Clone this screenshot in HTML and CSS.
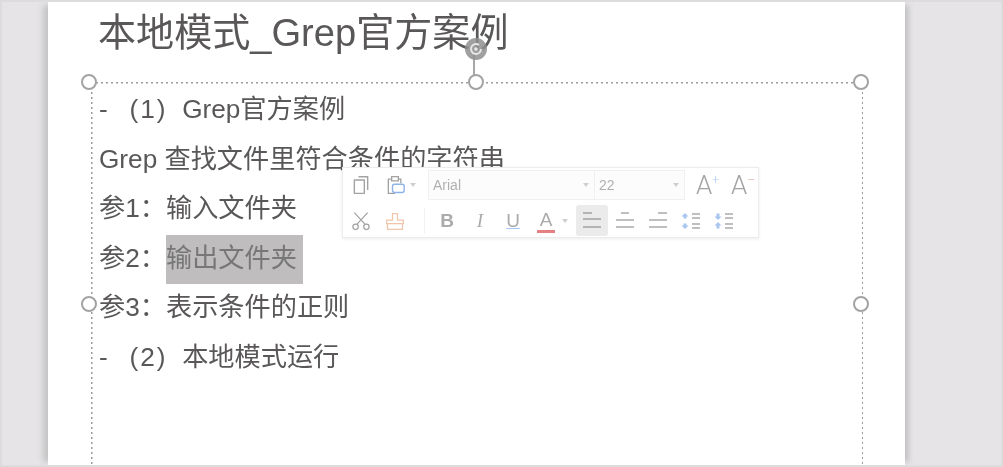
FILE: index.html
```html
<!DOCTYPE html>
<html lang="zh">
<head>
<meta charset="utf-8">
<title>本地模式_Grep官方案例</title>
<link rel="stylesheet" href="styles.css">
</head>
<body>
<div class="screen">
  <div class="slide">
    <h1 class="title">本地模式_Grep官方案例</h1>
    <div class="body">
      <p>-&nbsp;&nbsp;&nbsp;<span class="num">(1)</span>&nbsp;&nbsp;Grep官方案例</p>
      <p>Grep 查找文件里符合条件的字符串</p>
      <p>参1：输入文件夹</p>
      <p>参2：<span class="sel">输出文件夹</span></p>
      <p>参3：表示条件的正则</p>
      <p>-&nbsp;&nbsp;&nbsp;<span class="num">(2)</span>&nbsp;&nbsp;本地模式运行</p>
    </div>

    <div class="frame"></div>
    <div class="stem"></div>
    <svg class="rotate" viewBox="0 0 24 24" width="24" height="24">
      <circle cx="12" cy="12" r="11" fill="#8f8f8f" fill-opacity=".85"/>
      <path d="M17 12a5 5 0 1 1-2-4" fill="none" stroke="#e8e8e8" stroke-width="1.8"/>
      <circle cx="12" cy="12" r="1.8" fill="#e8e8e8"/>
    </svg>
    <span class="handle h-tl"></span>
    <span class="handle h-tc"></span>
    <span class="handle h-tr"></span>
    <span class="handle h-ml"></span>
    <span class="handle h-mr"></span>

    <div class="toolbar">
      <div class="row">
        <svg class="ico" viewBox="0 0 24 24"><path d="M9 2h11v16M4 6h12v16H4z" fill="none" stroke="#a3a3a3" stroke-width="1.7" stroke-linejoin="round"/></svg>
        <svg class="ico ico-wide" viewBox="0 0 24 24"><path d="M8 5H4v17h8M16 5h3v5M8 2h8v5H8z" fill="none" stroke="#a3a3a3" stroke-width="1.6"/><rect x="9" y="11" width="14" height="10" rx="2.5" fill="#fff" stroke="#8fb2e8" stroke-width="1.7"/></svg>
        <span class="caret"></span>
        <div class="field field-font"><span>Arial</span><span class="caret"></span></div>
        <div class="field field-size"><span>22</span><span class="caret"></span></div>
        <span class="grow">A<sup>+</sup></span>
        <span class="grow shrink">A<sup>–</sup></span>
      </div>
      <div class="row">
        <svg class="ico" viewBox="0 0 24 24"><path d="M4 2l13 14M20 2L7 16" fill="none" stroke="#a3a3a3" stroke-width="1.5"/><circle cx="5.500" cy="19" r="3.200" fill="none" stroke="#a3a3a3" stroke-width="1.500"/><circle cx="18.500" cy="19" r="3.200" fill="none" stroke="#a3a3a3" stroke-width="1.500"/></svg>
        <svg class="ico brush" viewBox="0 0 24 24"><path d="M9 11V3h6v8h7v4H2v-4zM3 15v7h18v-7" fill="none" stroke="#f0c6ab" stroke-width="1.500"/></svg>
        <span class="sep"></span>
        <span class="fmt fmt-b">B</span>
        <span class="fmt fmt-i">I</span>
        <span class="fmt fmt-u">U</span>
        <span class="fmt fmt-a">A</span>
        <span class="caret caret-a"></span>
        <span class="align on"><svg viewBox="0 0 20 20"><path d="M1 2h9M1 8h18M1 16h18" stroke="#a3a3a3" stroke-width="1.500"/></svg></span>
        <span class="align"><svg viewBox="0 0 20 20"><path d="M6 2h8M1 9h18M1 16h18" stroke="#ababab" stroke-width="1.500"/></svg></span>
        <span class="align"><svg viewBox="0 0 20 20"><path d="M10 2h9M1 9h18M1 16h18" stroke="#ababab" stroke-width="1.500"/></svg></span>
        <svg class="ls" viewBox="0 0 20 20"><path d="M4 2l3.500 3.500H5.500v2h-3v-2H.5zM4 18l3.500-3.500H5.500v-2h-3v2H.5z" fill="#a9c6f0"/><path d="M11 3h8M11 7h8M11 13h8M11 17h8" stroke="#ababab" stroke-width="1.500"/></svg>
        <svg class="ls" viewBox="0 0 20 20"><path d="M4 9l3.500-3.500H5.500V2.500h-3v3H.5zM4 11l3.500 3.500H5.500v3h-3v-3H.5z" fill="#a9c6f0"/><path d="M11 3h8M11 7h8M11 13h8M11 17h8" stroke="#ababab" stroke-width="1.500"/></svg>
      </div>
    </div>
  </div>
</div>
</body>
</html>
```
FILE: styles.css
```css
html, body {
  margin: 0;
  padding: 0;
  overflow: hidden;
}
.screen {
  box-sizing: border-box;
  width: 1003px;
  height: 467px;
  border: 2px solid #dcdcdc;
  background: #e6e4e7;
  padding-left: 46px;
  overflow: hidden;
  filter: blur(0.4px);
}
.slide {
  position: relative;
  box-sizing: border-box;
  width: 857px;
  height: 463px;
  background: #fff;
  padding: 9px 0 0 51px;
  box-shadow: -8px 0 6px -3px #c4c4c4, 7px 0 5px -3px #c4c4c4;
  font-family: "Liberation Sans", "Noto Sans CJK SC", sans-serif;
  color: #595757;
}
.title {
  margin: 0 0 0 -1px;
  font-weight: 400;
  font-size: 38.1px;
  line-height: 44px;
  white-space: nowrap;
}
.body {
  margin-top: 30px;
  font-size: 26.2px;
  line-height: 49.6px;
}
.body p {
  margin: 0;
  height: 49.6px;
  white-space: nowrap;
}
.num {
  letter-spacing: 2px;
}
.sel {
  display: inline-block;
  vertical-align: top;
  margin-top: 1px;
  height: 49px;
  line-height: 47.6px;
  padding-right: 6px;
  background: #bfbdbe;
  color: #777;
}
.frame {
  position: absolute;
  left: 43px;
  top: 80px;
  width: 772px;
  height: 400px;
  background-image:
    repeating-linear-gradient(90deg, #9b9b9b 0 2px, transparent 2px 5px),
    repeating-linear-gradient(180deg, #9b9b9b 0 2px, transparent 2px 5px),
    repeating-linear-gradient(180deg, #9b9b9b 0 2px, transparent 2px 5px);
  background-size: 100% 1.5px, 1.5px 100%, 1.5px 100%;
  background-position: 0 0, 0 0, 100% 0;
  background-repeat: no-repeat;
}
.stem {
  position: absolute;
  left: 425px;
  top: 50px;
  width: 2px;
  height: 26px;
  background: #a8a8a8;
}
.rotate {
  position: absolute;
  left: 416px;
  top: 35px;
}
.handle {
  position: absolute;
  box-sizing: border-box;
  width: 16px;
  height: 16px;
  border-radius: 50%;
  border: 2px solid #a3a3a3;
  background: #fff;
}
.h-tl { left: 33px; top: 72px; }
.h-tc { left: 420px; top: 72px; }
.h-tr { left: 805px; top: 72px; }
.h-ml { left: 33px; top: 294px; }
.h-mr { left: 805px; top: 294px; }
.toolbar {
  position: absolute;
  left: 294px;
  top: 165px;
  box-sizing: border-box;
  width: 417px;
  height: 71px;
  background: #fff;
  border: 1px solid #ececec;
  box-shadow: 0 1px 3px rgba(0, 0, 0, .08);
  padding: 1px 0 0 8px;
  display: flex;
  flex-direction: column;
  gap: 5px;
}
.row {
  display: flex;
  align-items: center;
  height: 31px;
}
.ico {
  width: 20px;
  height: 20px;
  margin-right: 14px;
  flex: none;
}
.ico-wide {
  margin-right: 5px;
}
.caret {
  display: inline-block;
  width: 0;
  height: 0;
  border-left: 3.5px solid transparent;
  border-right: 3.5px solid transparent;
  border-top: 4px solid #cfcfcf;
  flex: none;
}
.field {
  box-sizing: border-box;
  height: 30px;
  display: flex;
  align-items: center;
  justify-content: space-between;
  background: #fcfcfc;
  border: 1px solid #f0f0f0;
  padding: 0 5px 0 4px;
  font-size: 14px;
  color: #b0b0b0;
}
.field-font {
  width: 167px;
  margin-left: 12px;
}
.field-size {
  width: 90px;
  border-left: 0;
}
.grow {
  font-family: Roboto, "Liberation Sans", sans-serif;
  font-weight: 300;
  font-size: 26px;
  color: #a3a3a3;
  margin-left: 11px;
  width: 26px;
  line-height: 30px;
  white-space: nowrap;
}
.grow sup {
  font-size: 12px;
  line-height: 0;
  color: #a9c6f0;
  vertical-align: 10px;
}
.shrink {
  margin-left: 9px;
}
.shrink sup {
  color: #d8b0a8;
}
.brush {
  margin-right: 19px;
}
.sep {
  width: 1px;
  height: 26px;
  background: #f2f2f2;
  margin-right: 13px;
}
.fmt {
  width: 18px;
  text-align: center;
  font-size: 19px;
  line-height: 26px;
  color: #ababab;
  margin-right: 15px;
  flex: none;
}
.fmt-b { font-weight: 700; }
.fmt-i { font-family: "Liberation Serif", serif; font-style: italic; }
.fmt-u { text-decoration: underline; text-decoration-color: #a9c6f0; }
.fmt-a {
  margin-right: 7px;
  border-bottom: 3px solid #e58080;
  line-height: 21px;
  height: 21px;
}
.caret-a { margin-right: 8px; }
.align {
  box-sizing: border-box;
  width: 32px;
  height: 31px;
  padding: 6px;
  border-radius: 3px;
  margin-right: 1px;
  flex: none;
  display: flex;
}
.align svg { width: 20px; height: 20px; }
.align.on { background: #ebebeb; }
.ls {
  width: 20px;
  height: 20px;
  margin: 0 13px 0 6px;
  flex: none;
}
.ls + .ls {
  margin-left: 0;
}
```
